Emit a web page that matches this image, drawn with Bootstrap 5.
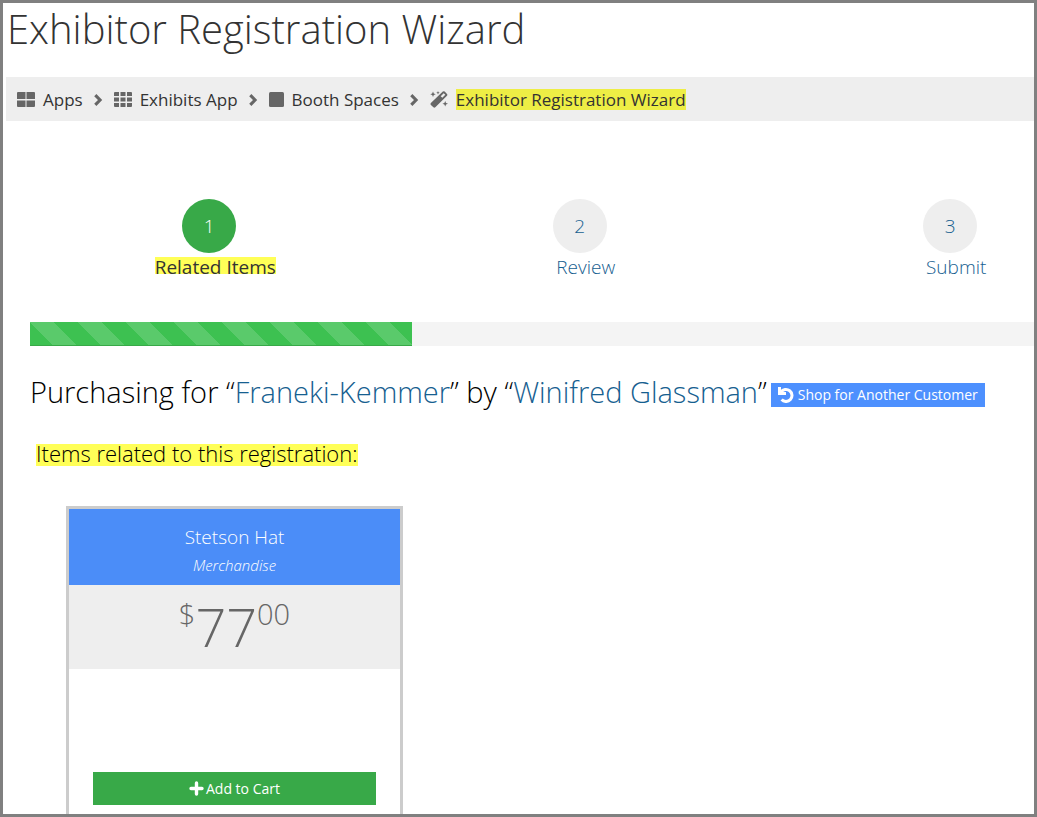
<!DOCTYPE html>
<html lang="en">
<head>
<meta charset="utf-8">
<meta name="viewport" content="width=device-width, initial-scale=1">
<title>Exhibitor Registration Wizard</title>
<link href="https://cdn.jsdelivr.net/npm/bootstrap@5.3.0/dist/css/bootstrap.min.css" rel="stylesheet">
<style>
  body { font-family: "Open Sans", "Noto Sans", sans-serif; font-weight: 300; color: #000; background: #fff; }
  a { color: #166090; text-decoration: none; }
  .page-frame { border: 3px solid #808080; }
  .page-title { font-size: 40px; line-height: 52px; font-weight: 300; color: #333; padding-left: 4px; }
  .crumb-bar { background: #eee; margin: 22px 0 0 3px; padding: 12px 11px 11px; font-size: 17px; line-height: 21px; }
  .crumb-bar a { color: #333; font-weight: 400; gap: 8px; }
  .crumb-bar svg { fill: #666; flex: none; }
  .crumb-sep { width: 11px; height: 12px; margin: 0 10px; }
  .hl { background: #ffff57; color: #333; }
  .crumb-bar .hl { background: #eeee45; }
  .wizard { margin-left: 27px; }
  .steps { padding-top: 78px; }
  .step { flex: 0 0 36.9%; font-size: 19px; text-align: center; }
  .step-number { padding-right: 12px; }
  .step-dot { display: block; width: 54px; height: 54px; line-height: 54px; border-radius: 50%; background: #eee; margin: 0 auto 4px; }
  .step.current .step-dot { background: #38a948; color: #fff; }
  .step.current .step-label { font-weight: 400; }
  .step-label { display: block; width: fit-content; height: 17px; margin: 0 auto; padding-top: 2px; line-height: 17px; }
  .wizard .progress { height: 24px; border-radius: 0; background: #f4f4f4; margin-top: 48px; }
  .wizard .progress-bar { background-color: #3dc151; background-size: 48px 48px; box-shadow: inset 0 -1px 0 #38a948;
    background-image: linear-gradient(45deg, rgba(255,255,255,.15) 25%, transparent 25%, transparent 50%, rgba(255,255,255,.15) 50%, rgba(255,255,255,.15) 75%, transparent 75%, transparent); }
  .buyer-row { margin-top: 26px; column-gap: 4px; }
  .buyer { font-size: 29px; line-height: 40px; font-weight: 300; }
  .shop-btn { background: #4d90fe; color: #fff; font-size: 14px; line-height: 24px; border: 0; border-radius: 0; padding: 0 7px; gap: 4px; margin-top: 11px; }
  .related { font-size: 22px; line-height: 18px; font-weight: 300; margin: 32px 0 0 6px; }
  .related .hl { color: #000; display: inline-block; padding-bottom: 4px; }
  .item-card { width: 337px; border: 3px solid #ccc; border-bottom: 0; margin: 40px 0 0 36px; text-align: center; }
  .item-head { background: #4b8df8; color: #fff; padding: 14px 0 6px; }
  .item-name { font-size: 19px; line-height: 28px; font-weight: 300; }
  .item-kind { font-size: 15px; line-height: 28px; font-style: italic; }
  .item-price { background: #eee; color: #666; height: 84px; padding-top: 14px; font-size: 54px; line-height: 54px; }
  .price-side { font-size: 29px; line-height: 30px; }
  .cart-btn { background: #38a948; color: #fff; font-size: 14px; line-height: 19px; border: 0; border-radius: 0; padding: 7px; gap: 2px; margin: 103px 24px 9px; }
</style>
</head>
<body>
<main class="page-frame min-vh-100 d-flex flex-column overflow-hidden">
  <h1 class="page-title mb-0">Exhibitor Registration Wizard</h1>
  <nav class="crumb-bar d-flex align-items-center flex-wrap" aria-label="Breadcrumb">
    <a class="d-flex align-items-center" href="#"><svg width="18" height="15" viewBox="0 0 18 15"><path d="M1 0h7.500v7H0V1q0-1 1-1zM9.500 0H17q1 0 1 1v6H9.500zM0 8.500h8.500V15H1q-1 0-1-1zM9.500 8.500H18V14q0 1-1 1H9.500z"/></svg>Apps</a>
    <svg class="crumb-sep" viewBox="0 0 11 12"><path d="M1.200 2.200 3.400 0 9.200 6l-5.800 6-2.200-2.200L5 6z"/></svg>
    <a class="d-flex align-items-center" href="#"><svg width="18" height="15" viewBox="0 0 18 15"><path d="M1 0h4v4H0V1q0-1 1-1zM6.500 0h5v4h-5zM13 0h4q1 0 1 1v3h-5zM0 5.500h5v4H0zM6.500 5.500h5v4h-5zM13 5.500h5v4h-5zM0 11h5v4H1q-1 0-1-1zM6.500 11h5v4h-5zM13 11h5v3q0 1-1 1h-4z"/></svg>Exhibits App</a>
    <svg class="crumb-sep" viewBox="0 0 11 12"><path d="M1.200 2.200 3.400 0 9.200 6l-5.800 6-2.200-2.200L5 6z"/></svg>
    <a class="d-flex align-items-center" href="#"><svg width="15" height="15" viewBox="0 0 15 15"><rect width="15" height="15" rx="1.500"/></svg>Booth Spaces</a>
    <svg class="crumb-sep" viewBox="0 0 11 12"><path d="M1.200 2.200 3.400 0 9.200 6l-5.800 6-2.200-2.200L5 6z"/></svg>
    <a class="d-flex align-items-center" href="#" aria-current="page"><svg width="18" height="17" viewBox="0 0 18 17"><path fill-rule="evenodd" d="M12.800.6q1-.8 1.900 0l2.300 2.300q.8.900 0 1.900L5.300 16.300q-1 .8-1.900 0L.9 13.900q-.8-.9 0-1.900zM13.700 2.200l-3 3 1.600 1.600 3-3zM3 .6l.8 1.900 1.900.8-1.900.8L3 6l-.8-1.900-1.900-.8 1.900-.8zM8 0l.5 1.200 1.200.5-1.200.5L8 3.400l-.5-1.200-1.200-.5 1.200-.5zM15.200 10l.8 2 2 .8-2 .8-.8 2-.8-2-2-.8 2-.8z"/></svg><span class="hl">Exhibitor Registration Wizard</span></a>
  </nav>

  <div class="wizard d-flex flex-column flex-grow-1">
    <ol class="steps list-unstyled d-flex mb-0">
      <li class="step current"><a class="d-block" href="#"><span class="step-number d-block"><span class="step-dot">1</span></span><span class="step-label hl">Related Items</span></a></li>
      <li class="step"><a class="d-block" href="#"><span class="step-number d-block"><span class="step-dot">2</span></span><span class="step-label">Review</span></a></li>
      <li class="step"><a class="d-block" href="#"><span class="step-number d-block"><span class="step-dot">3</span></span><span class="step-label">Submit</span></a></li>
    </ol>
    <div class="progress" role="progressbar" aria-label="Registration progress" aria-valuenow="38" aria-valuemin="0" aria-valuemax="100"><div class="progress-bar" style="width:38%"></div></div>

    <div class="buyer-row d-flex align-items-start flex-wrap">
      <h2 class="buyer mb-0">Purchasing for “<a href="#">Franeki-Kemmer</a>” by “<a href="#">Winifred Glassman</a>”</h2>
      <button type="button" class="btn shop-btn d-flex align-items-center"><svg width="16" height="16" viewBox="0 0 16 16" fill="none" stroke="#fff" stroke-width="3"><path d="M1.500 0v6.500H8"/><path d="M3 5.200A6 6 0 1 1 3.600 12.600"/></svg>Shop for Another Customer</button>
    </div>
    <h3 class="related mb-0"><span class="hl">Items related to this registration:</span></h3>

    <section class="item-card flex-grow-1">
      <div class="item-head">
        <h4 class="item-name mb-0">Stetson Hat</h4>
        <div class="item-kind">Merchandise</div>
      </div>
      <div class="item-price d-flex justify-content-center"><span class="price-side">$</span><span>77</span><span class="price-side">00</span></div>
      <div class="d-grid">
        <button type="button" class="btn cart-btn d-flex align-items-center justify-content-center"><svg width="15" height="15" viewBox="0 0 15 15"><path d="M7.500 2v11M2 7.500h11" stroke="#fff" stroke-width="3.400" stroke-linecap="round"/></svg>Add to Cart</button>
      </div>
    </section>
  </div>
</main>
<script src="https://cdn.jsdelivr.net/npm/bootstrap@5.3.0/dist/js/bootstrap.bundle.min.js"></script>
</body>
</html>
